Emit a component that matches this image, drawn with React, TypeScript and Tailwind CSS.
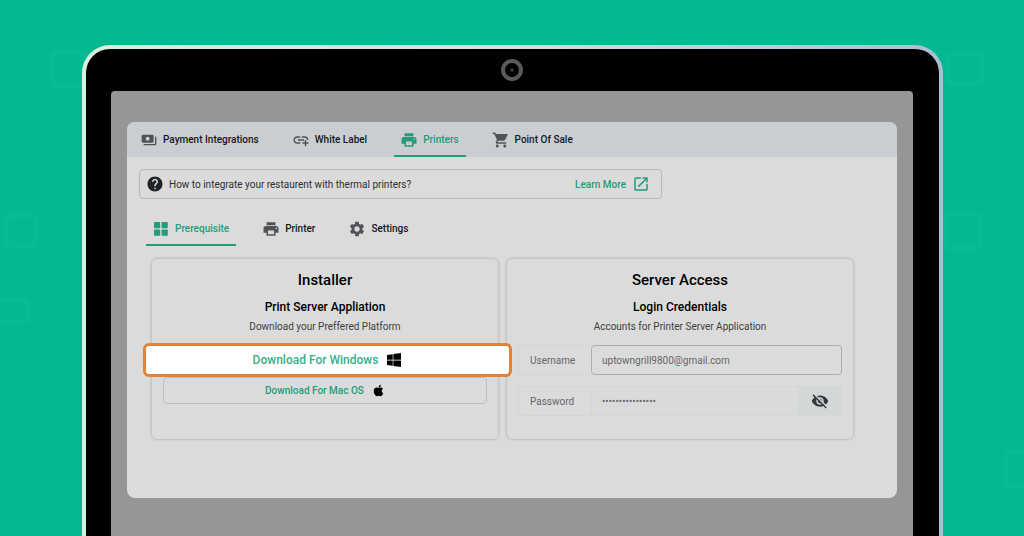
import { useState } from "react"
import type { ReactNode } from "react"
import { FaApple, FaWindows } from "react-icons/fa"
import {
  MdAddLink,
  MdHelp,
  MdOpenInNew,
  MdPayments,
  MdPrint,
  MdSettings,
  MdShoppingCart,
  MdVisibility,
  MdVisibilityOff,
} from "react-icons/md"

function GridIcon() {
  return (
    <svg viewBox="0 0 16 16" className="size-4" fill="currentColor">
      <rect x="1" y="1" width="6.2" height="6.2" rx="0.8" />
      <rect x="8.6" y="1" width="6.2" height="6.2" rx="0.8" />
      <rect x="1" y="8.6" width="6.2" height="6.2" rx="0.8" />
      <rect x="8.6" y="8.6" width="6.2" height="6.2" rx="0.8" />
    </svg>
  )
}

// faint rounded squares behind the laptop
function Backdrop() {
  return (
    <svg className="absolute inset-0 size-full" fill="none" stroke="#0fc29b" strokeOpacity="0.25" strokeWidth="6">
      <rect x="6" y="215" width="30" height="30" rx="5" />
      <rect x="-12" y="300" width="40" height="22" rx="5" />
      <rect x="52" y="52" width="34" height="34" rx="5" />
      <rect x="948" y="54" width="34" height="30" rx="5" />
      <rect x="946" y="214" width="34" height="34" rx="5" />
      <rect x="1006" y="452" width="34" height="34" rx="5" />
    </svg>
  )
}

const mainTabs = [
  { name: "Payment Integrations", icon: <MdPayments className="size-4" /> },
  { name: "White Label", icon: <MdAddLink className="-m-px size-[18px]" /> },
  { name: "Printers", icon: <MdPrint className="-m-px size-[18px]" /> },
  { name: "Point Of Sale", icon: <MdShoppingCart className="-m-px size-[18px]" /> },
]

const subTabs = [
  { name: "Prerequisite", icon: <GridIcon /> },
  { name: "Printer", icon: <MdPrint className="-m-px size-[18px]" /> },
  { name: "Settings", icon: <MdSettings className="-m-px size-[18px]" /> },
]

interface TabProps {
  name: string
  icon: ReactNode
  active: boolean
  onClick: () => void
}

function Tab({ name, icon, active, onClick }: TabProps) {
  return (
    <button
      onClick={onClick}
      className={`flex h-full items-center gap-[6px] border-y-2 border-t-transparent px-[7px] font-medium ${
        active ? "border-b-[#239c7b] text-[#239c7b]" : "border-b-transparent text-[#15181b]"
      }`}
    >
      <span className={active ? "" : "text-[#505459]"}>{icon}</span>
      {name}
    </button>
  )
}

function Card({ title, subtitle, text, children }: { title: string; subtitle: string; text: string; children: ReactNode }) {
  return (
    <section className="h-[182px] rounded-md border border-[#c0c6c6] px-[11px] pt-[11px] text-center shadow-[0_0_2px_#b4bcbc]">
      <h2 className="text-[15px] leading-5 font-medium text-black">{title}</h2>
      <h3 className="mt-[9px] text-[12px] leading-4 font-medium text-black">{subtitle}</h3>
      <p className="mt-1 leading-4 text-[#3c3f42]">{text}</p>
      {children}
    </section>
  )
}

export default function App() {
  const [mainTab, setMainTab] = useState("Printers")
  const [subTab, setSubTab] = useState("Prerequisite")
  const [showPassword, setShowPassword] = useState(false)
  const [username, setUsername] = useState("uptowngrill9800@gmail.com")
  const [password, setPassword] = useState("printserver98000")

  return (
    <div className="relative h-screen overflow-hidden bg-[#04b992] pt-[45px] pr-[81px] pl-[82px] font-[Roboto,sans-serif] text-[10px]">
      <Backdrop />
      <div className="relative h-full rounded-t-[28px] bg-linear-to-r from-[#d8f0dc] via-[#d9dce4] to-[#a9bfd2] px-1 pt-1">
        <div className="flex h-full flex-col rounded-t-[24px] bg-black pr-[26px] pl-[25px]">
          <div className="flex h-[42px] shrink-0 items-center justify-center">
            <div className="flex size-[22px] items-center justify-center rounded-full border-4 border-[#5a5a5a]">
              <div className="size-1 rounded-full bg-[#333]" />
            </div>
          </div>
          <div className="grow rounded-t-[4px] bg-[#969696] px-4 pt-[31px]">
            <main className="h-[376px] overflow-hidden rounded-lg bg-[#dbdbdb]">
              <nav className="flex h-[35px] gap-5 bg-[#cacdd1] px-[7px]">
                {mainTabs.map(tab => (
                  <Tab
                    key={tab.name}
                    name={tab.name}
                    icon={tab.icon}
                    active={mainTab === tab.name}
                    onClick={() => setMainTab(tab.name)}
                  />
                ))}
              </nav>

              <div className="mt-3 ml-3 flex h-[30px] w-[523px] items-center rounded border border-[#aebdb9] px-[6px] text-[#2c2f33]">
                <MdHelp className="size-[18px] text-[#202327]" />
                <span className="ml-[5px]">How to integrate your restaurent with thermal printers?</span>
                <a href="#learn" className="mr-[5px] ml-auto flex items-center gap-[6px] font-medium text-[#239c7b]">
                  Learn More
                  <MdOpenInNew className="size-[18px]" />
                </a>
              </div>

              <nav className="mt-3 ml-[19px] flex h-[35px] gap-5">
                {subTabs.map(tab => (
                  <Tab
                    key={tab.name}
                    name={tab.name}
                    icon={tab.icon}
                    active={subTab === tab.name}
                    onClick={() => setSubTab(tab.name)}
                  />
                ))}
              </nav>

              <div className="mt-3 mr-[43px] ml-6 grid grid-cols-2 gap-[7px]">
                <Card title="Installer" subtitle="Print Server Appliation" text="Download your Preffered Platform">
                  <button className="relative z-10 mt-2 -ml-5 flex h-[34px] w-[calc(100%+45px)] items-center justify-center gap-2 rounded-md border-3 border-[#e08238] bg-white text-[12px] font-medium text-[#34b08c]">
                    Download For Windows
                    <FaWindows className="size-4 text-black" />
                  </button>
                  <button className="flex h-[27px] w-full items-center justify-center gap-2 rounded border border-[#b9c0c0] font-medium text-[#239c7b]">
                    Download For Mac OS
                    <FaApple className="size-[13px] text-black" />
                  </button>
                </Card>

                <Card title="Server Access" subtitle="Login Credentials" text="Accounts for Printer Server Application">
                  <div className="mt-[10px] flex h-[30px] items-center text-[#63676b]">
                    <label
                      htmlFor="username"
                      className="flex h-full w-[73px] shrink-0 items-center rounded-l border border-r-0 border-[#d3d5d6] pl-[11px]"
                    >
                      Username
                    </label>
                    <input
                      id="username"
                      value={username}
                      onChange={e => setUsername(e.target.value)}
                      className="h-full min-w-0 grow rounded border border-[#a9adae] px-[10px] outline-none"
                    />
                  </div>
                  <div className="mt-[11px] flex h-[30px] items-center text-[#63676b]">
                    <label
                      htmlFor="password"
                      className="flex h-full w-[73px] shrink-0 items-center rounded-l border border-r-0 border-[#d3d5d6] pl-[11px]"
                    >
                      Password
                    </label>
                    <input
                      id="password"
                      type={showPassword ? "text" : "password"}
                      value={password}
                      onChange={e => setPassword(e.target.value)}
                      className="h-full min-w-0 grow border border-r-0 border-[#d3d5d6] bg-[#d9dada] px-[10px] outline-none"
                    />
                    <button
                      aria-label="Toggle password"
                      onClick={() => setShowPassword(!showPassword)}
                      className="flex h-full w-11 items-center justify-center rounded-r bg-[#d4d7d8] text-[#34383c]"
                    >
                      {showPassword ? <MdVisibility className="size-[18px]" /> : <MdVisibilityOff className="size-[18px]" />}
                    </button>
                  </div>
                </Card>
              </div>
            </main>
          </div>
        </div>
      </div>
    </div>
  )
}
